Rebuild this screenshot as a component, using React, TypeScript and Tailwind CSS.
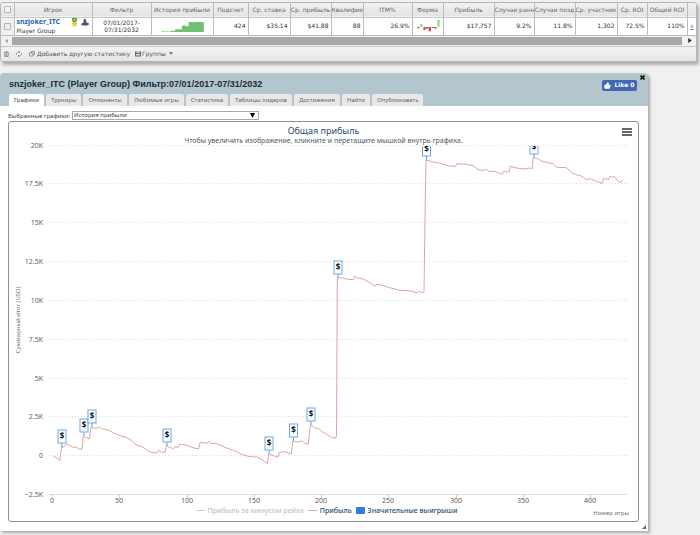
import { ThumbsUp } from "lucide-react";

type Column = { label: string; value: string; width: string };

const columns: Column[] = [
  { label: "Подсчет", value: "424", width: "w-[35px]" },
  { label: "Ср. ставка", value: "$35.14", width: "w-[42px]" },
  { label: "Ср. прибыль", value: "$41.88", width: "w-[41px]" },
  { label: "Квалифик", value: "88", width: "w-[32px]" },
  { label: "ITM%", value: "26.9%", width: "w-[49px]" },
  { label: "Форма", value: "", width: "w-[31px]" },
  { label: "Прибыль", value: "$17,757", width: "w-[51px]" },
  { label: "Случаи ранн", value: "9.2%", width: "w-[40px]" },
  { label: "Случаи позд", value: "11.8%", width: "w-[41px]" },
  { label: "Ср. участник", value: "1,302", width: "w-[42px]" },
  { label: "Ср. ROI", value: "72.5%", width: "w-[30px]" },
  { label: "Общий ROI", value: "110%", width: "w-[40px]" },
];

const tabs = [
  "Графики",
  "Турниры",
  "Оппоненты",
  "Любимые игры",
  "Статистика",
  "Таблицы лидеров",
  "Достижения",
  "Найти",
  "Опубликовать",
];

const yAxis = [
  { label: "20K", y: 146 },
  { label: "17.5K", y: 184 },
  { label: "15K", y: 223 },
  { label: "12.5K", y: 262 },
  { label: "10K", y: 301 },
  { label: "7.5K", y: 340 },
  { label: "5K", y: 379 },
  { label: "2.5K", y: 417 },
  { label: "0", y: 456 },
  { label: "−2.5K", y: 495 },
];

const xAxis = [
  { label: "0", x: 52 },
  { label: "50", x: 119 },
  { label: "100", x: 187 },
  { label: "150", x: 254 },
  { label: "200", x: 321 },
  { label: "250", x: 388 },
  { label: "300", x: 456 },
  { label: "350", x: 523 },
  { label: "400", x: 590 },
];

const markers = [
  { x: 62, y: 430 },
  { x: 84, y: 419 },
  { x: 92, y: 410 },
  { x: 167, y: 429 },
  { x: 269, y: 437 },
  { x: 293.5, y: 424 },
  { x: 311, y: 408 },
  { x: 338, y: 261 },
  { x: 426.5, y: 143 },
  { x: 534, y: 141 },
];

const profit =
  "53.3,456.3 56.7,458 60,460.3 61.7,446 63.3,447.7 65.3,445 66.7,444 69.3,445.3 73.3,447.3 76.7,447.3 79.3,449 82,449.3 83.3,436 86,437.7 89.3,438.7 91,427.3 95,428.3 97.7,428 99,426.7 101.3,428.7 108.3,430 115,433.7 121.7,436.3 126,437 131,440 135,444.3 143.3,447.3 148.3,451.3 156.7,453.3 158.3,450.3 161.7,452 165,452.3 166.3,445.7 169,447 173.3,448.7 175,446.7 178.3,447.3 180,444 186.7,445.3 195,448.3 198.7,448.7 200,442.3 203.3,442.7 207.3,443.3 208.7,441.3 210.7,443.3 216.7,443.7 225,447.3 233.3,450.3 241.7,454.3 248.3,456.3 256.7,457 262.7,460 265.7,463 267.3,463.3 268.7,454 273.3,455.7 278,457.3 279.3,452.3 285,451.7 291.3,454 292.7,441 298.3,442 301.7,440.7 305,443.3 308.3,444.3 310.3,425.3 313.3,426.3 315,428.3 318.3,428.3 321.7,431.3 326.7,434.3 330.7,437 335.3,438.3 336.5,436 337.3,277.7 341.7,277.7 348.3,279.3 353.3,279.7 354.3,276.3 358.3,278 363.3,279 368.3,281.7 372.7,284.7 375,286.3 376.7,284 383.3,285.7 391.7,288.3 400,290.3 408.3,290.7 417.3,292.7 419.3,291.3 422,293 424,292 425.3,200 426,160 433.3,162 440,163.3 448.3,165.7 455.7,166.3 456.7,163.7 466.7,164.3 473.3,165.7 477.7,169.3 482.3,170.7 485.7,169.3 490,171.7 495,171.3 498.3,173 502.3,174.3 503.7,171.3 509,172.3 510.3,166.3 516.7,168 523.3,169 530,168 532,169 533.3,157.7 538.3,159 541.7,161 548.3,162.7 553.3,163.7 556.7,167.3 566.7,167.7 571.7,172.7 576.7,175 580,175.3 586.7,179.7 590,178.7 596.7,181.3 602,183.3 603.3,178.7 609,179.3 610,176.3 612.3,177.3 614.3,176.3 618.3,181.3 620.7,182.7 622.3,180";

const historyShape =
  "0,32 8,31 16,32 16,31 28,32 28,30 34,29 40,31 40,27 46,25 62,25 62,17 66,13 72,13 72,16 82,16 82,4 88,2 94,4 104,2 108,3 116,2 128,4 128,33 0,33";

const formBars = [
  { x: 0, y: 21, h: 4, up: false },
  { x: 9, y: 12, h: 9, up: true },
  { x: 18, y: 21, h: 9, up: false },
  { x: 26, y: 21, h: 5, up: false },
  { x: 34, y: 21, h: 13, up: false },
  { x: 43, y: 21, h: 3, up: false },
  { x: 51, y: 21, h: 5, up: false },
  { x: 60, y: 0, h: 20, up: true },
];

function FormChart() {
  return (
    <svg viewBox="0 0 67 36" className="ml-1 h-3 w-[23px]" aria-label="Форма">
      {formBars.map((b) => (
        <rect key={b.x} x={b.x} y={b.y} width="7" height={b.h} fill={b.up ? "#7de67d" : "#c25656"} />
      ))}
    </svg>
  );
}

function StatsGrid() {
  const cell = "overflow-hidden border-r border-[#bcbcbc] p-0";
  return (
    <section className="mr-[3px] overflow-hidden rounded-[3px] border border-[#b4b4b4] bg-[#ececec] shadow-[2px_3px_3px_#b0b0b0]">
      <table className="w-full table-fixed border-collapse font-['DejaVu_Sans','Verdana',sans-serif] text-[6px] leading-2 text-[#333]">
        <thead>
          <tr className="h-[14px] border-b border-[#c8c8c8] bg-linear-to-b from-[#f1f1f1] to-[#e4e4e4] text-[#666]">
            <th className={`${cell} w-[13px]`}>
              <input type="checkbox" aria-label="Выбрать все" className="mx-auto block size-[7px] appearance-none rounded-[1px] border border-[#b5b5b5] bg-[#f4f4f4]" />
            </th>
            <th className={`${cell} w-[78px] font-normal`}>Игрок</th>
            <th className={`${cell} w-[59px] font-normal`}>Фильтр</th>
            <th className={`${cell} w-[62px] font-normal whitespace-nowrap`}>История прибыли</th>
            {columns.map((c) => (
              <th key={c.label} className={`${cell} ${c.width} text-center font-normal whitespace-nowrap`}>
                <div className="overflow-hidden">{c.label}</div>
              </th>
            ))}
            <th className="p-0" />
          </tr>
        </thead>
        <tbody>
          <tr className="h-[18px] border-b border-[#bcbcbc] bg-white">
            <td className={`${cell} bg-[#f0f0f0]`}>
              <input type="checkbox" aria-label="Выбрать snzjoker_ITC" className="mx-auto block size-[7px] appearance-none rounded-[1px] border border-[#b5b5b5] bg-[#eee]" />
            </td>
            <td className={`${cell} pl-[2px]`}>
              <div className="flex items-center">
                <a href="#player" className="text-[7px] leading-2 font-bold text-[#1c5fae] font-['Noto_Sans',sans-serif]">snzjoker_ITC</a>
                <svg viewBox="0 0 14 18" className="ml-auto h-[9px] w-[7px]" aria-label="Награда">
                  <path d="M2 0h10v5l-2 4H4L2 5z" fill="#6aa52c" />
                  <path d="M5 2h4v3H5z" fill="#b9d95a" />
                  <path d="M7 7l2 3h4l-3 3 2 5-5-3-5 3 2-5-3-3h4z" fill="#f0c23c" />
                </svg>
                <svg viewBox="0 0 16 16" className="mr-[3px] ml-[3px] size-[8px]" aria-label="Акула">
                  <path d="M7 1l3 2 1 6 4 1 1 3-4 2H4l-4-2 1-2 4-2V5z" fill="#4b5672" />
                </svg>
              </div>
              <div>Player Group</div>
            </td>
            <td className={`${cell} text-center leading-[7px]`}>07/01/2017-<br />07/31/2032</td>
            <td className={cell}>
              <svg viewBox="0 0 128 33" className="mx-auto mt-px h-[11px] w-[43px]" aria-label="История прибыли">
                <polygon points={historyShape} fill="#73bf73" />
              </svg>
            </td>
            {columns.map((c) => (
              <td key={c.label} className={`${cell} pr-[2px] text-right`}>
                {c.value || <FormChart />}
              </td>
            ))}
            <td className="p-0 text-center">
              <a href="#remove" className="text-[#4b8cc8] underline">x</a>
            </td>
          </tr>
        </tbody>
      </table>
      <div className="flex h-[10px] items-center justify-between bg-[#f1f1f1] px-1">
        <button aria-label="Влево" className="flex w-[7px]">
          <svg viewBox="0 0 4 6" className="h-[4px] w-[3px]"><path d="M4 0v6L0 3z" fill="#999" /></svg>
        </button>
        <div className="mr-[6px] h-[8px] flex-1 bg-[#a8a8a8]" />
        <button aria-label="Вправо" className="flex w-[4px]">
          <svg viewBox="0 0 4 6" className="h-[5px] w-[4px]"><path d="M0 0v6l4-3z" fill="#222" /></svg>
        </button>
      </div>
      <div className="flex h-[15px] items-center border-t border-[#c6c6c6] bg-linear-to-b from-[#f3f3f3] to-[#e5e5e5] pl-[3px] font-['DejaVu_Sans','Verdana',sans-serif] text-[6px] leading-2 text-[#555]">
        <button aria-label="Удалить">
          <svg viewBox="0 0 10 12" className="h-[6px] w-[5px]" fill="none" stroke="#888" strokeWidth="1.6">
            <path d="M0 3h10M3.500 3V1h3v2M1.500 3v8h7V3M4 5v5M6 5v5" />
          </svg>
        </button>
        <button aria-label="Обновить" className="ml-[7px]">
          <svg viewBox="0 0 12 12" className="size-[6px]" fill="none" stroke="#888" strokeWidth="1.6">
            <path d="M1 8V5l3-3h4M6 0l2 2-2 2M11 4v3l-3 3H4M6 8l-2 2 2 2" />
          </svg>
        </button>
        <button className="ml-[7px] flex items-center">
          <svg viewBox="0 0 12 12" className="mr-[2px] size-[6px]" fill="none" stroke="#777" strokeWidth="1.4">
            <path d="M4 4V1h7v6H8M1 4h7v6H1z" />
          </svg>
          Добавить другую статистику
        </button>
        <button className="ml-[5px] flex items-center">
          <svg viewBox="0 0 12 12" className="mr-px size-[6px]">
            <path d="M0 1h12v10H0z" fill="#666" />
            <path d="M3 1h6v3H3zM2 6h8v3H2z" fill="#ddd" />
          </svg>
          Группы
          <svg viewBox="0 0 6 4" className="ml-[3px] h-[3px] w-[4px]"><path d="M0 0h6L3 4z" fill="#666" /></svg>
        </button>
      </div>
    </section>
  );
}

function ProfitChart() {
  return (
    <figure className="rounded-[3px] border border-[#8f8f8f] bg-white font-['Noto_Sans',sans-serif] text-[#4d5b66]">
      <div className="relative h-[24px] pt-[3px] text-center">
        <h2 className="text-[9px] leading-3 text-[#274b6d]">Общая прибыль</h2>
        <p className="text-[7px] leading-[7px]">Чтобы увеличить изображение, кликните и перетащите мышкой внутрь графика.</p>
        <button aria-label="Меню графика" className="absolute top-[6px] right-[6px] flex w-[10px] flex-col gap-px">
          <span className="h-[2px] bg-[#666]" />
          <span className="h-[2px] bg-[#666]" />
          <span className="h-[2px] bg-[#666]" />
        </button>
      </div>
      <svg viewBox="9 146 629 359" className="block h-auto w-full overflow-visible">
        <defs>
          <clipPath id="plot">
            <rect x="47" y="146" width="582" height="349" />
          </clipPath>
        </defs>
        {yAxis.map((t) => (
          <g key={t.label}>
            {t.y < 495 && <path d={`M48 ${t.y - 0.5}H628`} stroke="#dcdcdc" strokeDasharray="1 2" />}
            <text x="43" y={t.y + 2} textAnchor="end" fontSize="7" fill="#606060">{t.label}</text>
          </g>
        ))}
        <path d="M48 494.500H628" stroke="#dedede" strokeWidth="1" />
        {xAxis.map((t) => (
          <g key={t.label}>
            <path d={`M${t.x + 0.5} 495v3`} stroke="#d0d0d0" />
            <text x={t.x} y="503" textAnchor="middle" fontSize="7" fill="#606060">{t.label}</text>
          </g>
        ))}
        <text transform="translate(20 320) rotate(-90)" textAnchor="middle" fontSize="6" fill="#707070">Суммарный итог (USD)</text>
        <g clipPath="url(#plot)">
          <polyline points={profit} fill="none" stroke="#dba5a5" strokeWidth="1" strokeLinejoin="round" />
          {markers.map((m) => (
            <g key={m.x}>
              <path d={`M${m.x} ${m.y + 13}v4`} stroke="#5b9de6" />
              <rect x={m.x - 4} y={m.y} width="8" height="13" fill="#fff" stroke="#6ba8ec" />
              <text x={m.x} y={m.y + 9} textAnchor="middle" fontSize="8" fontWeight="700" fill="#111">$</text>
            </g>
          ))}
        </g>
      </svg>
      <figcaption className="relative flex h-[16px] items-start justify-center gap-1 pt-[2px] pl-[6px] text-[7px] leading-2 font-medium text-[#274b6d]">
        <button className="flex items-center gap-[3px] text-[#c4c4c4]"><i className="h-px w-[9px] bg-[#ccc]" />Прибыль за минусом рейка</button>
        <button className="flex items-center gap-[3px]"><i className="h-px w-[9px] bg-[#dba5a5]" />Прибыль</button>
        <button className="flex items-center gap-[3px]"><i className="h-[7px] w-[9px] rounded-[1px] bg-[#2f7ed8]" />Значительные выигрыши</button>
        <span className="absolute top-[4px] right-[9px] text-[6px] font-normal text-[#707070]">Номер игры</span>
      </figcaption>
    </figure>
  );
}

export default function App() {
  return (
    <main className="min-h-screen bg-[#f0f0f0] pt-[2px]">
      <StatsGrid />
      <section className="relative mt-[11px] mr-[52px] rounded-t-[4px] bg-white pb-[9px] shadow-[2px_2px_3px_#aaa]">
        <header className="rounded-t-[4px] bg-[#b3c6ce] pt-[5px] pl-[9px]">
          <div className="flex h-4 items-start justify-between pr-[11px]">
            <h1 className="text-[9px] leading-3 font-bold text-[#1e2b33] font-['Liberation_Sans',Arial,sans-serif]">
              snzjoker_ITC (Player Group) Фильтр:07/01/2017-07/31/2032
            </h1>
            <button className="mt-[2px] flex h-[11px] w-[35px] items-center justify-center gap-[3px] rounded-[2px] bg-[#4267b2] text-[6px] leading-2 font-bold text-white font-['DejaVu_Sans',sans-serif]">
              <ThumbsUp className="size-[7px]" fill="#fff" />
              Like 0
            </button>
          </div>
          <button aria-label="Закрыть" className="absolute top-[2px] right-[3px]">
            <svg viewBox="0 0 5 5" className="size-[5px]"><path d="M0.500 0.500l4 4M4.500 0.500l-4 4" stroke="#111" strokeWidth="1.6" /></svg>
          </button>
          <nav className="flex gap-[2px] font-['Noto_Sans',sans-serif]">
            {tabs.map((t, i) => (
              <button
                key={t}
                className={
                  i === 0
                    ? "h-3 rounded-t-[2px] bg-white px-[5px] text-[6px] leading-3 text-[#444]"
                    : "h-3 rounded-t-[2px] bg-[#e8e8e8] px-[5px] text-[6px] leading-3 text-[#666]"
                }
              >
                {t}
              </button>
            ))}
          </nav>
        </header>
        <div className="pt-[5px] pr-[9px] pl-2">
          <div className="flex h-[10px] items-center gap-[2px] text-[6px] leading-2 text-[#444] font-['Noto_Sans',sans-serif]">
            <label htmlFor="graph">Выбранные графики:</label>
            <div className="relative flex w-[187px]">
              <select id="graph" className="h-[9px] w-full appearance-none border border-[#a9a9a9] bg-white pl-px leading-[7px] text-[#444]">
                <option>История прибыли</option>
              </select>
              <svg viewBox="0 0 5 5" className="pointer-events-none absolute top-[2px] right-[4px] size-[5px]"><path d="M0 0h5L2.500 5z" fill="#000" /></svg>
            </div>
          </div>
          <ProfitChart />
        </div>
        <svg viewBox="0 0 5 5" className="absolute right-[2px] bottom-[2px] size-[4px]"><path d="M5 0v5H0z" fill="#666" /></svg>
      </section>
    </main>
  );
}
